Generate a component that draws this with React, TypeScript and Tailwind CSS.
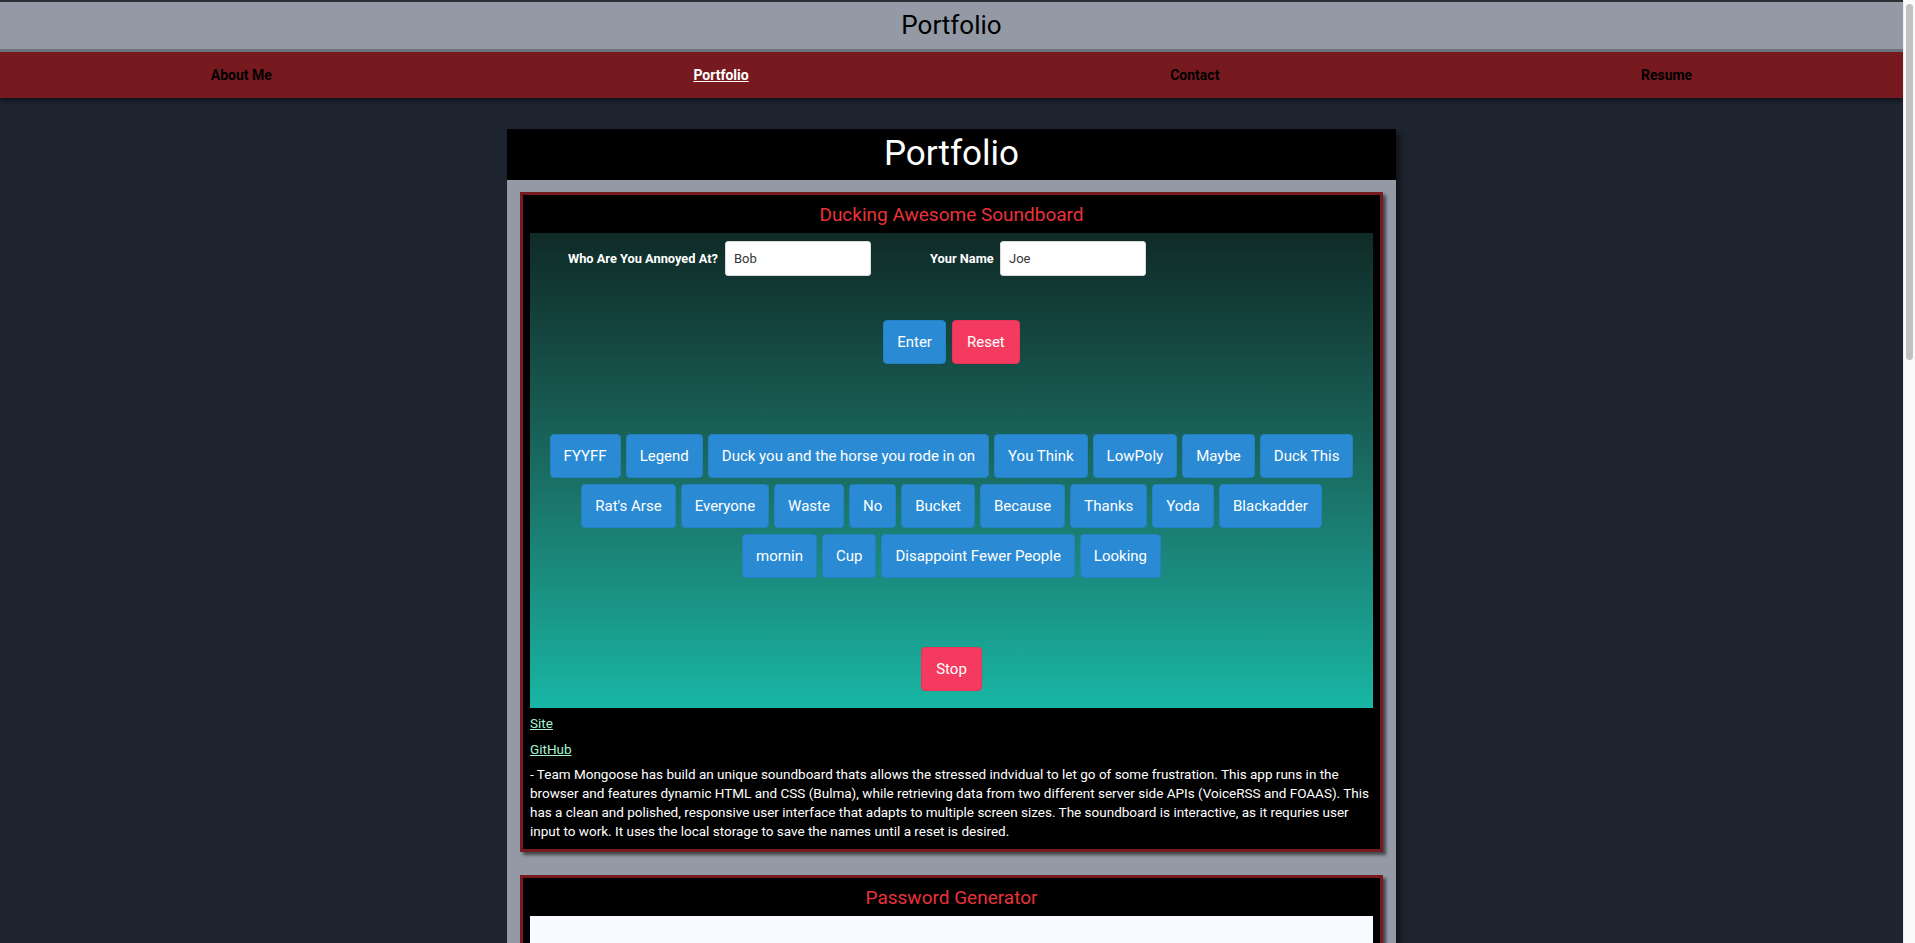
import React from 'react';

const navLinks = [
  { label: 'About Me', active: false },
  { label: 'Portfolio', active: true },
  { label: 'Contact', active: false },
  { label: 'Resume', active: false },
];

const soundRows = [
  ['FYYFF', 'Legend', 'Duck you and the horse you rode in on', 'You Think', 'LowPoly', 'Maybe', 'Duck This'],
  ["Rat's Arse", 'Everyone', 'Waste', 'No', 'Bucket', 'Because', 'Thanks', 'Yoda', 'Blackadder'],
  ['mornin', 'Cup', 'Disappoint Fewer People', 'Looking'],
];

const font = { fontFamily: 'Roboto, "Noto Sans", sans-serif' };

const BlueButton: React.FC<{ label: string }> = ({ label }) => (
  <button className="h-[44px] px-[13px] rounded-[4px] bg-[#2a8bd4] border border-[#2680c4] text-white text-[15px]">
    {label}
  </button>
);

const RedButton: React.FC<{ label: string }> = ({ label }) => (
  <button className="h-[44px] px-[14px] rounded-[4px] bg-[#f43b5f] border border-[#e8345a] text-white text-[15px]">
    {label}
  </button>
);

// the embedded soundboard app
const Soundboard: React.FC = () => (
  <div className="h-[475px] bg-gradient-to-b from-[#0f2b27] to-[#17b6a4] pt-[8px]">
    <div className="flex items-center pl-[38px]">
      <label className="w-[149px] whitespace-nowrap text-right text-white font-bold text-[12.8px] mr-[8px]">Who Are You Annoyed At?</label>
      <input
        readOnly
        value="Bob"
        className="w-[146px] h-[35px] bg-white rounded-[3px] border border-[#dbdbdb] px-[8px] text-[13px] text-[#363636] outline-none"
      />
      <label className="ml-[59px] w-[62px] whitespace-nowrap text-right text-white font-bold text-[12.8px] mr-[8px]">Your Name</label>
      <input
        readOnly
        value="Joe"
        className="w-[146px] h-[35px] bg-white rounded-[3px] border border-[#dbdbdb] px-[8px] text-[13px] text-[#363636] outline-none"
      />
    </div>

    <div className="flex justify-center gap-[6px] mt-[44px]">
      <BlueButton label="Enter" />
      <RedButton label="Reset" />
    </div>

    <div className="mt-[70px] flex flex-col gap-[6px]">
      {soundRows.map((row, i) => (
        <div key={i} className="flex justify-center gap-[5px]">
          {row.map((s) => (
            <BlueButton key={s} label={s} />
          ))}
        </div>
      ))}
    </div>

    <div className="flex justify-center mt-[69px]">
      <RedButton label="Stop" />
    </div>
  </div>
);

const ProjectCard: React.FC<{ title: string; children: React.ReactNode; description?: string }> = ({
  title,
  children,
  description,
}) => (
  <div className="border-[3px] border-[#761a1f] bg-black px-[7px] pt-[6px] pb-[8px] shadow-[3px_3px_3px_rgba(0,0,0,0.55)]">
    <h3 className="h-[28px] leading-[28px] text-center text-[19px] text-[#e8323a] mb-[4px]">{title}</h3>
    {children}
    {description && (
      <>
        <a href="#" className="block mt-[6px] text-[13.5px] leading-[19px] text-[#a7f3d0] underline w-fit">Site</a>
        <a href="#" className="block mt-[7px] text-[13.5px] leading-[19px] text-[#a7f3d0] underline w-fit">GitHub</a>
        <p className="mt-[6px] text-[13.5px] leading-[19px] text-white">{description}</p>
      </>
    )}
  </div>
);

export default function App() {
  return (
    <div className="flex bg-[#1e2430]" style={font}>
      <div className="w-[1903px] shrink-0 pb-10">
        {/* Top header */}
        <header className="border-t-2 border-b-[3px] border-t-[#2b2f36] border-b-[#6d737c] bg-[#939aa5] h-[52px] flex items-center justify-center relative z-10">
          <h1 className="text-[26px] text-black">Portfolio</h1>
        </header>

        {/* Nav */}
        <nav className="bg-[#761a1f] h-[46px] flex items-center justify-around shadow-[0_3px_4px_rgba(0,0,0,0.45)] relative">
          {navLinks.map((l) => (
            <a
              key={l.label}
              href="#"
              className={l.active ? 'text-white underline font-bold text-[14px]' : 'text-black font-bold text-[14px]'}
            >
              {l.label}
            </a>
          ))}
        </nav>

        {/* Main card */}
        <main className="w-[889px] mx-auto mt-[31px] shadow-[4px_4px_6px_rgba(0,0,0,0.5)]">
          <div className="bg-black h-[51px] flex items-center justify-center">
            <h2 className="text-[35px] text-white">Portfolio</h2>
          </div>
          <div className="bg-[#939aa5] px-[13px] pt-[12px] pb-[20px] flex flex-col gap-[23px]">
            <ProjectCard
              title="Ducking Awesome Soundboard"
              description="- Team Mongoose has build an unique soundboard thats allows the stressed indvidual to let go of some frustration. This app runs in the browser and features dynamic HTML and CSS (Bulma), while retrieving data from two different server side APIs (VoiceRSS and FOAAS). This has a clean and polished, responsive user interface that adapts to multiple screen sizes. The soundboard is interactive, as it requries user input to work. It uses the local storage to save the names until a reset is desired."
            >
              <Soundboard />
            </ProjectCard>

            <ProjectCard
              title="Password Generator"
              description="- A simple password generator that builds a random password from the character types and length chosen by the user."
            >
              <div className="h-[474px] bg-[#f8faff]" />
            </ProjectCard>

            <ProjectCard
              title="Weather Dashboard"
              description="- A weather dashboard that shows the current conditions and a five day forecast for any city the user searches for."
            >
              <div className="h-[474px] bg-[#f8faff]" />
            </ProjectCard>
          </div>
        </main>
      </div>

      {/* browser scrollbar track */}
      <div className="w-[12px] shrink-0 self-start sticky top-0 h-screen bg-[#fafafa] border-l border-[#ececec] px-[2px] pt-[4px]">
        <div className="h-[356px] rounded-full bg-[#c1c1c1]" />
      </div>
    </div>
  );
}
